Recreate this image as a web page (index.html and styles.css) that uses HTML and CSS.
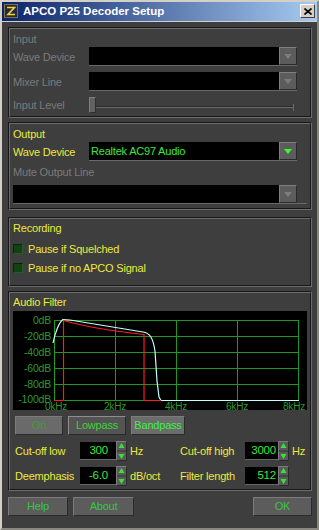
FILE: index.html
```html
<!DOCTYPE html>
<html lang="en">
<head>
  <meta charset="UTF-8" />
  <meta name="viewport" content="width=device-width, initial-scale=1.0"/>
  <title>APCO P25 Decoder Setup</title>
  <link rel="stylesheet" href="styles.css">
</head>
<body>

<div class="window">

  <!-- Title bar -->
  <div class="titlebar">
    <svg class="app-icon" width="14" height="14" viewBox="0 0 14 14">
      <rect x="0.5" y="0.5" width="13" height="13" fill="#2c2838" stroke="#7a7448"/>
      <path d="M3 3.5H10.5L4 10.5H11" fill="none" stroke="#e8d840" stroke-width="1.6"/>
    </svg>
    <span class="title">APCO P25 Decoder Setup</span>
    <div class="close-btn">
      <svg width="8" height="7" viewBox="0 0 8 7"><path d="M0.5 0.5L7.5 6.5M7.5 0.5L0.5 6.5" stroke="#000" stroke-width="1.6"/></svg>
    </div>
  </div>

  <div class="content">

    <!-- Input -->
    <div class="panel panel-input">
      <div class="legend off">Input</div>
      <div class="row">
        <span class="label off">Wave Device</span>
        <div class="combo">
          <div class="combo-field"></div>
          <div class="combo-btn"><span class="arrow"></span></div>
        </div>
      </div>
      <div class="row">
        <span class="label off">Mixer Line</span>
        <div class="combo">
          <div class="combo-field"></div>
          <div class="combo-btn"><span class="arrow"></span></div>
        </div>
      </div>
      <div class="row slider-row">
        <span class="label off">Input Level</span>
        <div class="slider">
          <div class="thumb"></div>
          <div class="track"></div>
          <div class="tick"></div>
        </div>
      </div>
    </div>

    <!-- Output -->
    <div class="panel panel-output">
      <div class="legend">Output</div>
      <div class="row">
        <span class="label">Wave Device</span>
        <div class="combo">
          <div class="combo-field">Realtek AC97 Audio</div>
          <div class="combo-btn"><span class="arrow on"></span></div>
        </div>
      </div>
      <div class="sublabel off">Mute Output Line</div>
      <div class="combo combo-wide">
        <div class="combo-field"></div>
        <div class="combo-btn"><span class="arrow"></span></div>
      </div>
    </div>

    <!-- Recording -->
    <div class="panel panel-rec">
      <div class="legend">Recording</div>
      <div class="check-row">
        <span class="checkbox"></span>
        <span>Pause if Squelched</span>
      </div>
      <div class="check-row">
        <span class="checkbox"></span>
        <span>Pause if no APCO Signal</span>
      </div>
    </div>

    <!-- Audio filter -->
    <div class="panel panel-filter">
      <div class="legend">Audio Filter</div>
      <svg class="graph" width="294" height="99" viewBox="0 0 294 99">
        <rect width="294" height="99" fill="#000"/>
        <g stroke="#1e9a1e" stroke-width="1" fill="none">
          <path d="M41 9.5H286M41 25.5H286M41 41.5H286M41 57.5H286M41 73.5H286M41 89.5H286"/>
          <path d="M41.5 9V90M102.5 9V90M163.5 9V90M224.5 9V90M285.5 9V90"/>
        </g>
        <g fill="#2c9a2c" font-family="Liberation Sans, Arial, sans-serif" font-size="10.5" text-anchor="end">
          <text x="38" y="13">0dB</text>
          <text x="38" y="29">-20dB</text>
          <text x="38" y="45">-40dB</text>
          <text x="38" y="61">-60dB</text>
          <text x="38" y="77">-80dB</text>
          <text x="38" y="92">-100dB</text>
        </g>
        <g fill="#2c9a2c" font-family="Liberation Sans, Arial, sans-serif" font-size="10" text-anchor="middle">
          <text x="43" y="98.5">0kHz</text>
          <text x="102" y="98.5">2kHz</text>
          <text x="163" y="98.5">4kHz</text>
          <text x="224" y="98.5">6kHz</text>
          <text x="281" y="98.5">8kHz</text>
        </g>
        <path d="M40 32C42 22 46 11 50 8.5L57 9L130 21C137 22 140 27 142 40L144 70L146 86L148 89.5H286" fill="none" stroke="#c4ffff" stroke-width="1.2"/>
        <path d="M41 89.5H50.5V9.5Q80 18 131 23.5V89.5H148" fill="none" stroke="#ff1c1c" stroke-width="1.2"/>
      </svg>

      <div class="modes">
        <div class="btn mode mode-on">On</div>
        <div class="btn mode mode-low">Lowpass</div>
        <div class="btn mode mode-band">Bandpass</div>
      </div>

      <div class="params">
        <span class="plabel">Cut-off low</span>
        <div class="numbox">300</div>
        <svg class="spin" width="11" height="20" viewBox="0 0 11 20">
          <rect width="11" height="20" fill="#5a5a5a"/>
          <path d="M0.5 19.5V0.5H10.5" stroke="#7c7c7c" fill="none"/>
          <path d="M10.5 0.5V19.5H0.5" stroke="#2a2a2a" fill="none"/>
          <path d="M1 10H10" stroke="#303030"/>
          <path d="M5.5 2L8.5 7H2.5Z" fill="#36e436"/>
          <path d="M2.5 13H8.5L5.5 18Z" fill="#36e436"/>
        </svg>
        <span class="unit">Hz</span>
        <span class="plabel">Cut-off high</span>
        <div class="numbox narrow">3000</div>
        <svg class="spin" width="11" height="20" viewBox="0 0 11 20">
          <rect width="11" height="20" fill="#5a5a5a"/>
          <path d="M0.5 19.5V0.5H10.5" stroke="#7c7c7c" fill="none"/>
          <path d="M10.5 0.5V19.5H0.5" stroke="#2a2a2a" fill="none"/>
          <path d="M1 10H10" stroke="#303030"/>
          <path d="M5.5 2L8.5 7H2.5Z" fill="#36e436"/>
          <path d="M2.5 13H8.5L5.5 18Z" fill="#36e436"/>
        </svg>
        <span class="unit">Hz</span>

        <span class="plabel">Deemphasis</span>
        <div class="numbox">-6.0</div>
        <svg class="spin" width="11" height="20" viewBox="0 0 11 20">
          <rect width="11" height="20" fill="#5a5a5a"/>
          <path d="M0.5 19.5V0.5H10.5" stroke="#7c7c7c" fill="none"/>
          <path d="M10.5 0.5V19.5H0.5" stroke="#2a2a2a" fill="none"/>
          <path d="M1 10H10" stroke="#303030"/>
          <path d="M5.5 2L8.5 7H2.5Z" fill="#36e436"/>
          <path d="M2.5 13H8.5L5.5 18Z" fill="#36e436"/>
        </svg>
        <span class="unit">dB/oct</span>
        <span class="plabel">Filter length</span>
        <div class="numbox narrow">512</div>
        <svg class="spin" width="11" height="20" viewBox="0 0 11 20">
          <rect width="11" height="20" fill="#5a5a5a"/>
          <path d="M0.5 19.5V0.5H10.5" stroke="#7c7c7c" fill="none"/>
          <path d="M10.5 0.5V19.5H0.5" stroke="#2a2a2a" fill="none"/>
          <path d="M1 10H10" stroke="#303030"/>
          <path d="M5.5 2L8.5 7H2.5Z" fill="#36e436"/>
          <path d="M2.5 13H8.5L5.5 18Z" fill="#36e436"/>
        </svg>
        <span class="unit"></span>
      </div>
    </div>

    <!-- Dialog buttons -->
    <div class="actions">
      <div class="btn act act-help">Help</div>
      <div class="btn act act-about">About</div>
      <div class="btn act act-ok">OK</div>
    </div>

  </div>
</div>

</body>
</html>
```

FILE: styles.css
```css
* {
  box-sizing: border-box;
}

body {
  margin: 0;
  background: #3e3e3e;
  font-family: "Liberation Sans", Arial, sans-serif;
  font-size: 11px;
  letter-spacing: -0.2px;
  color: #eaea3c;
}

.window {
  width: 319px;
  height: 530px;
  border: 2px solid;
  border-color: #d4d0c8 #8a8780 #8a8780 #d4d0c8;
  background: #3e3e3e;
}

/* title bar */
.titlebar {
  height: 20px;
  display: flex;
  align-items: center;
  padding: 0 2px 1px 2px;
  background: linear-gradient(to right, #0a246a, #a6caf0);
  border-bottom: 1px solid #d4d0c8;
}

.app-icon {
  flex: 0 0 auto;
}

.title {
  margin-left: 5px;
  color: #fff;
  font-weight: bold;
  font-size: 11.5px;
  letter-spacing: 0;
}

.close-btn {
  margin-left: auto;
  width: 15px;
  height: 14px;
  background: #d4d0c8;
  border: 1px solid;
  border-color: #fff #404040 #404040 #fff;
  display: flex;
  align-items: center;
  justify-content: center;
}

/* panels */
.content {
  padding: 5px 5px 0 6px;
}

.panel {
  border: 2px groove #6c6c6c;
  padding: 4px 3px 3px 3px;
}

.panel-output {
  margin-top: 4px;
  padding-bottom: 4px;
}

.panel-rec {
  margin-top: 7px;
  padding: 3px 3px 9px 3px;
}

.panel-filter {
  margin-top: 4px;
  padding-top: 3px;
}

.legend {
  line-height: 13px;
}

.off {
  color: #7a7a7a;
}

.row {
  display: flex;
  align-items: center;
  margin-top: 6px;
}

.legend + .row {
  margin-top: 1px;
}

.label {
  width: 76px;
  flex: 0 0 auto;
}

/* combo box */
.combo {
  display: flex;
  border-bottom: 1px solid #686868;
}

.combo-field {
  width: 190px;
  height: 18px;
  background: #000;
  color: #3ce83c;
  line-height: 18px;
  padding-left: 2px;
}

.combo-wide {
  margin-top: 6px;
}

.combo-wide .combo-field {
  width: 266px;
}

.combo-btn {
  width: 18px;
  height: 18px;
  background: #5c5c5c;
  border: 1px solid;
  border-color: #7e7e7e #2a2a2a #2a2a2a #7e7e7e;
  display: flex;
  align-items: center;
  justify-content: center;
}

.arrow {
  width: 0;
  height: 0;
  border-left: 4px solid transparent;
  border-right: 4px solid transparent;
  border-top: 5px solid #7c7c7c;
}

.arrow.on {
  border-top-color: #30ff30;
}

.sublabel {
  margin-top: 5px;
  line-height: 13px;
}

/* slider */
.slider-row {
  height: 16px;
}

.slider {
  display: flex;
  align-items: center;
  height: 16px;
}

.thumb {
  width: 7px;
  height: 16px;
  background: #626262;
  border: 1px solid;
  border-color: #7e7e7e #2e2e2e #2e2e2e #7e7e7e;
}

.track {
  width: 197px;
  height: 2px;
  margin-top: 4px;
  border-top: 1px solid #2a2a2a;
  border-bottom: 1px solid #6a6a6a;
}

.tick {
  width: 1px;
  height: 7px;
  margin-top: 4px;
  background: #6a6a6a;
}

/* recording */
.check-row {
  display: flex;
  align-items: center;
  height: 16px;
  margin-top: 3px;
}

.legend + .check-row {
  margin-top: 6px;
}

.checkbox {
  width: 10px;
  height: 10px;
  margin-right: 5px;
  background: #114211;
  border: 1px solid;
  border-color: #0a260a #2a5a2a #2a5a2a #0a260a;
}

/* audio filter */
.graph {
  display: block;
  margin-top: 2px;
}

.btn {
  height: 19px;
  line-height: 17px;
  text-align: center;
  background: #5c5c5c;
  border: 1px solid;
  border-color: #7c7c7c #2a2a2a #2a2a2a #7c7c7c;
  color: #3cc43c;
}

.modes {
  display: flex;
  gap: 5px;
  margin: 6px 0 0 2px;
}

.mode-on {
  width: 48px;
  background: #6a6a6a;
  color: #3a9e3a;
}

.mode-low {
  width: 58px;
  background: #545454;
  border-color: #8e8e8e #2a2a2a #2a2a2a #8e8e8e;
  color: #3ad23a;
}

.mode-band {
  width: 54px;
  background: #6c6c6c;
  color: #3cf03c;
}

.params {
  display: grid;
  grid-template-columns: 65px 36px 11px 53px 65px 33px 11px 1fr;
  grid-template-rows: 20px 20px;
  row-gap: 5px;
  align-items: center;
  margin: 6px 0 0 2px;
}

.numbox {
  height: 18px;
  background: #000;
  border-bottom: 1px solid #686868;
  color: #3ce83c;
  text-align: right;
  line-height: 17px;
  padding-right: 8px;
  font-size: 11.5px;
}

.numbox.narrow {
  padding-right: 2px;
}

.spin {
  display: block;
}

.unit {
  padding-left: 3px;
}

/* bottom buttons */
.actions {
  display: flex;
  margin-top: 6px;
}

.act-help {
  width: 60px;
}

.act-about {
  width: 61px;
  margin-left: 5px;
}

.act-ok {
  width: 59px;
  margin-left: auto;
}
```
